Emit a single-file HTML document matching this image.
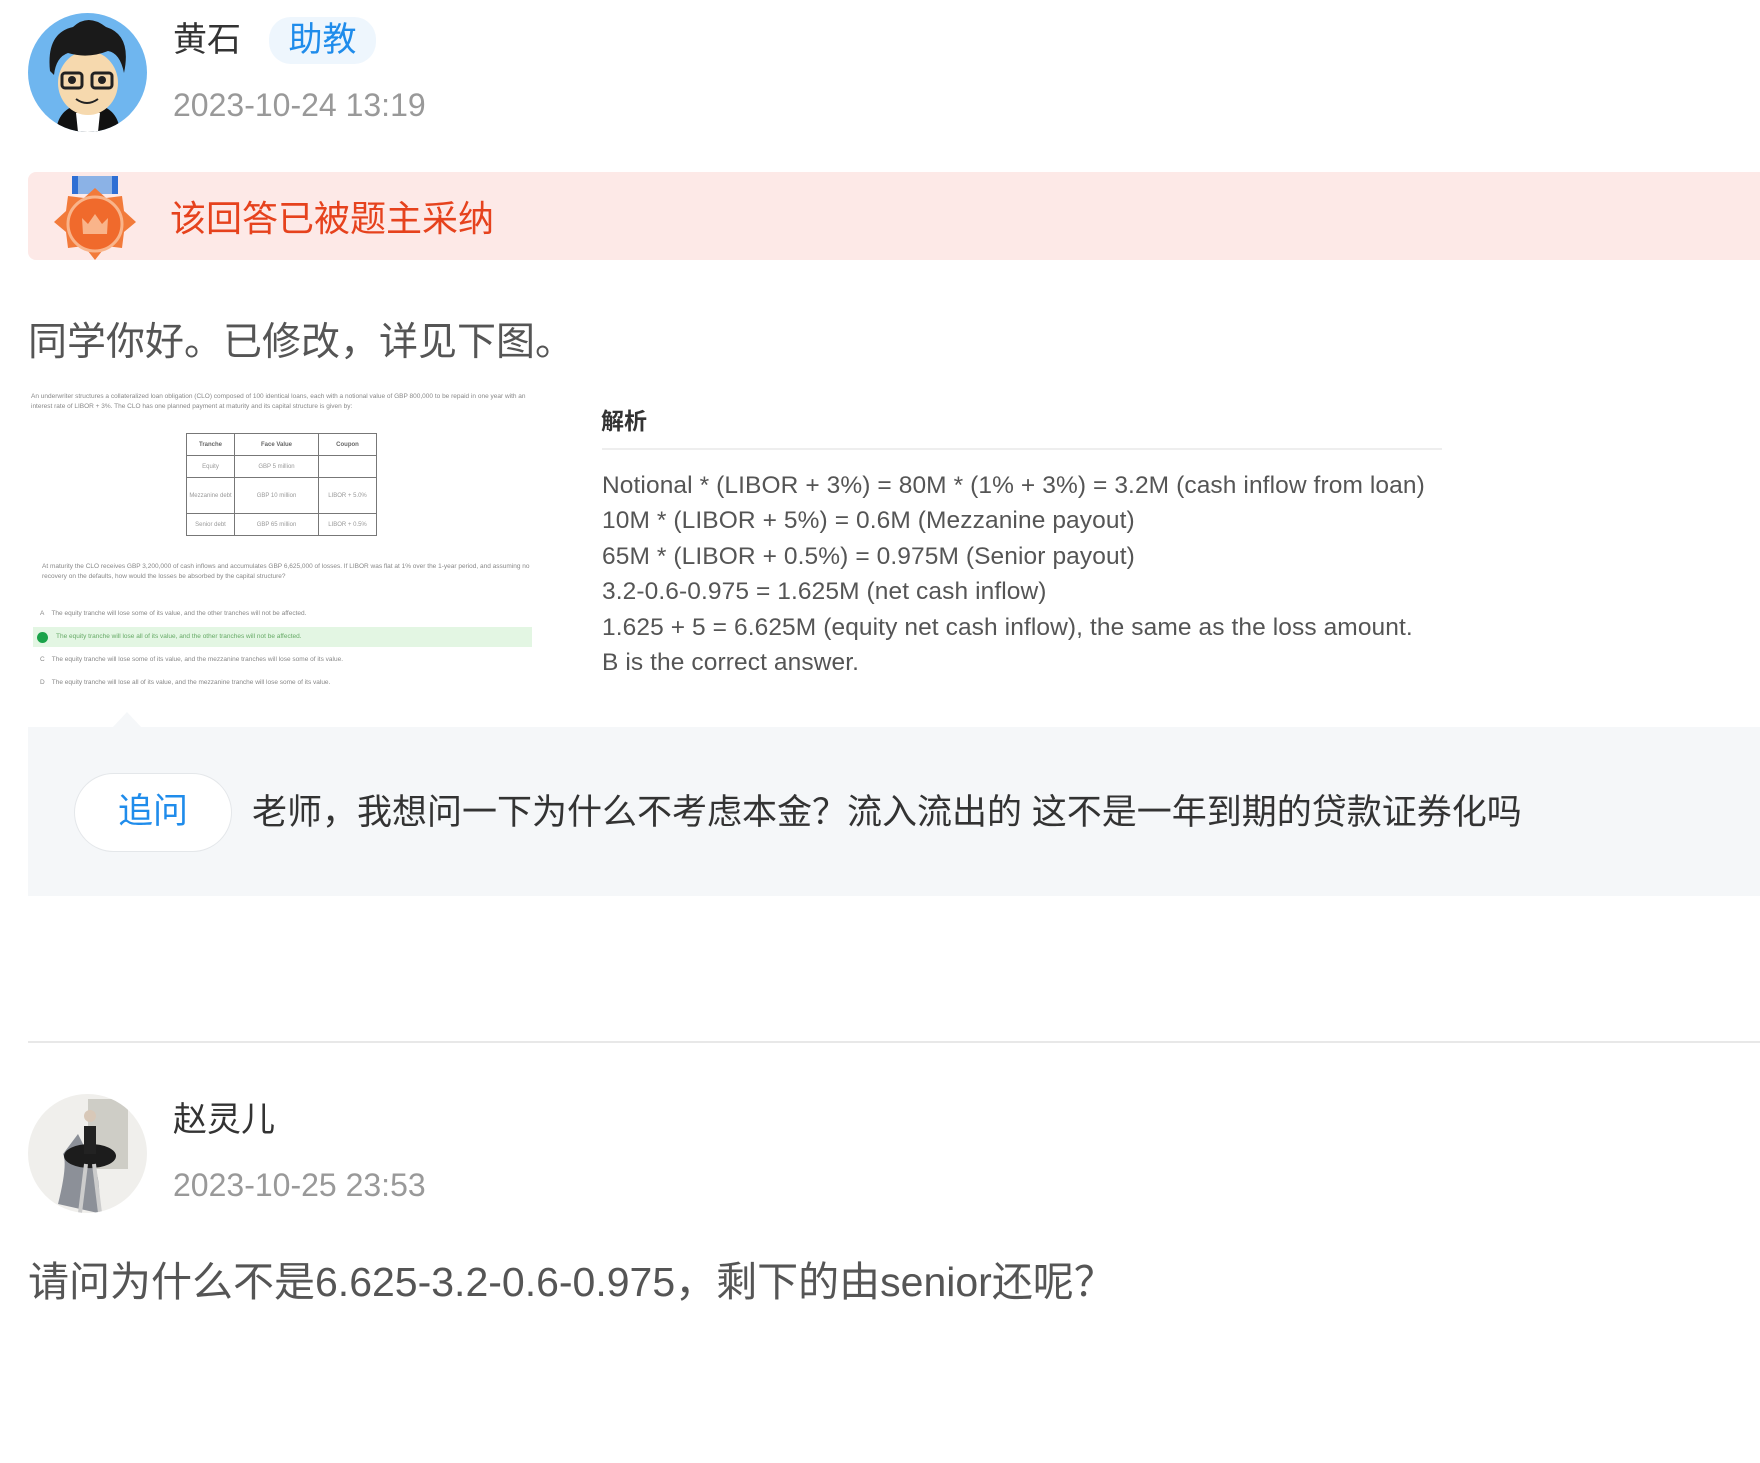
<!DOCTYPE html>
<html><head><meta charset="utf-8"><style>
*{margin:0;padding:0;box-sizing:border-box}
body{width:1760px;height:1463px;background:#fff;position:relative;overflow:hidden;font-family:"Liberation Sans","Noto Sans CJK SC",sans-serif}
.a{position:absolute;white-space:nowrap}
.tiny{font-size:6.5px;color:#888;line-height:10px;white-space:normal}
table{border-collapse:collapse;font-size:6px;color:#999;position:absolute}
td{border:1px solid #777;text-align:center;height:22px}
</style></head><body>
<!-- avatar 1 -->
<svg class="a" style="left:28px;top:13px" width="119" height="119" viewBox="0 0 119 119">
<clipPath id="c1"><circle cx="59.5" cy="59.5" r="59.5"/></clipPath>
<g clip-path="url(#c1)">
<rect width="119" height="119" fill="#6fb6ef"/>
<path d="M28 119 Q30 92 60 90 Q90 92 92 119Z" fill="#111"/>
<path d="M48 100 L72 100 L70 119 L50 119Z" fill="#fff"/>
<ellipse cx="60" cy="70" rx="30" ry="32" fill="#f6d9ae"/>
<path d="M22 58 Q18 20 45 14 Q60 0 78 14 Q104 22 96 60 Q92 40 80 38 Q60 46 40 40 Q28 44 26 62Z" fill="#1a1a1a"/>
<rect x="34" y="60" width="20" height="15" rx="3" fill="none" stroke="#222" stroke-width="3"/>
<rect x="64" y="60" width="20" height="15" rx="3" fill="none" stroke="#222" stroke-width="3"/>
<circle cx="44" cy="67" r="4" fill="#222"/><circle cx="74" cy="67" r="4" fill="#222"/>
<path d="M48 86 Q59 94 70 86" fill="none" stroke="#222" stroke-width="2"/>
</g></svg>
<div class="a" style="left:173px;top:18px;font-size:34px;color:#333;line-height:44px">黄石</div>
<div class="a" style="left:269px;top:17px;width:107px;height:47px;border-radius:22px;background:#eef6fd;color:#1f8ceb;font-size:34px;line-height:47px;text-align:center">助教</div>
<div class="a" style="left:173px;top:86px;font-size:32px;color:#999;line-height:38px">2023-10-24 13:19</div>
<!-- banner -->
<div class="a" style="left:28px;top:172px;width:1732px;height:88px;background:#fde9e7;border-radius:8px 0 0 8px"></div>
<svg class="a" style="left:52px;top:174px" width="88" height="90" viewBox="0 0 88 90">
<rect x="20" y="2" width="46" height="18" fill="#8bb2e6"/><rect x="20" y="2" width="6" height="18" fill="#2f6fd4"/><rect x="60" y="2" width="6" height="18" fill="#2f6fd4"/>
<polygon points="43,14 54,24 70,22 72,37 84,48 72,58 70,74 54,72 43,86 32,72 16,74 14,58 2,48 14,37 16,22 32,24" fill="#f27a3a"/>
<circle cx="43" cy="50" r="27" fill="#f06a2c" stroke="#f9b48a" stroke-width="3"/>
<path d="M30 44 L36 50 L43 40 L50 50 L56 44 L55 60 L31 60Z" fill="#f9b48a"/>
</svg>
<div class="a" style="left:170px;top:196px;font-size:36px;color:#e6421d;line-height:46px">该回答已被题主采纳</div>
<div class="a" style="left:28px;top:318px;font-size:39px;color:#555;line-height:50px">同学你好。已修改，详见下图。</div>
<!-- left image -->
<div class="a tiny" style="left:31px;top:392px;width:495px">An underwriter structures a collateralized loan obligation (CLO) composed of 100 identical loans, each with a notional value of GBP 800,000 to be repaid in one year with an interest rate of LIBOR + 3%. The CLO has one planned payment at maturity and its capital structure is given by:</div>
<table style="left:186px;top:433px;width:191px">
<tr><td style="width:48px;font-weight:bold;color:#666">Tranche</td><td style="width:84px;font-weight:bold;color:#666">Face Value</td><td style="font-weight:bold;color:#666">Coupon</td></tr>
<tr><td>Equity</td><td>GBP 5 million</td><td></td></tr>
<tr><td style="height:36px">Mezzanine debt</td><td>GBP 10 million</td><td>LIBOR + 5.0%</td></tr>
<tr><td>Senior debt</td><td>GBP 65 million</td><td>LIBOR + 0.5%</td></tr>
</table>
<div class="a tiny" style="left:42px;top:562px;width:490px">At maturity the CLO receives GBP 3,200,000 of cash inflows and accumulates GBP 6,625,000 of losses. If LIBOR was flat at 1% over the 1-year period, and assuming no recovery on the defaults, how would the losses be absorbed by the capital structure?</div>
<div class="a tiny" style="left:40px;top:609px">A&nbsp;&nbsp;&nbsp; The equity tranche will lose some of its value, and the other tranches will not be affected.</div>
<div class="a" style="left:33px;top:627px;width:499px;height:20px;background:#e3f6e3"></div>
<div class="a" style="left:37px;top:632px;width:11px;height:11px;border-radius:50%;background:#1aa34a"></div>
<div class="a tiny" style="left:56px;top:632px;color:#6a6">The equity tranche will lose all of its value, and the other tranches will not be affected.</div>
<div class="a tiny" style="left:40px;top:655px">C&nbsp;&nbsp;&nbsp; The equity tranche will lose some of its value, and the mezzanine tranches will lose some of its value.</div>
<div class="a tiny" style="left:40px;top:678px">D&nbsp;&nbsp;&nbsp; The equity tranche will lose all of its value, and the mezzanine tranche will lose some of its value.</div>
<!-- right image -->
<div class="a" style="left:601px;top:406px;font-size:23px;font-weight:bold;color:#333;line-height:30px">解析</div>
<div class="a" style="left:602px;top:448px;width:840px;height:2px;background:#eee"></div>
<div class="a" style="left:602px;top:468px;font-size:24.5px;color:#555;line-height:35.4px;letter-spacing:0.1px">Notional * (LIBOR + 3%) = 80M * (1% + 3%) = 3.2M (cash inflow from loan)<br>10M * (LIBOR + 5%) = 0.6M (Mezzanine payout)<br>65M * (LIBOR + 0.5%) = 0.975M (Senior payout)<br>3.2-0.6-0.975 = 1.625M (net cash inflow)<br>1.625 + 5 = 6.625M (equity net cash inflow), the same as the loss amount.<br>B is the correct answer.</div>
<!-- follow-up box -->
<div class="a" style="left:112px;top:712px;width:0;height:0;border-left:15px solid transparent;border-right:15px solid transparent;border-bottom:16px solid #f5f7f9"></div>
<div class="a" style="left:28px;top:727px;width:1732px;height:169px;background:#f5f7f9"></div>
<div class="a" style="left:74px;top:773px;width:158px;height:79px;border-radius:40px;background:#fff;border:1.5px solid #e4e7ea;color:#1f8ceb;font-size:35px;line-height:76px;text-align:center">追问</div>
<div class="a" style="left:252px;top:792px;font-size:35px;color:#333;line-height:42px">老师，我想问一下为什么不考虑本金？流入流出的 这不是一年到期的贷款证券化吗</div>
<div class="a" style="left:28px;top:1041px;width:1732px;height:2px;background:#e8e8e8"></div>
<!-- avatar 2 -->
<svg class="a" style="left:28px;top:1094px" width="119" height="119" viewBox="0 0 119 119">
<clipPath id="c2"><circle cx="59.5" cy="59.5" r="59.5"/></clipPath>
<g clip-path="url(#c2)">
<rect width="119" height="119" fill="#f0efec"/>
<rect x="60" y="5" width="40" height="70" fill="#b8b6ad" opacity=".6"/>
<path d="M30 110 Q40 70 35 60 L50 40 L60 60 Q75 80 70 119Z" fill="#4a5060" opacity=".6"/>
<ellipse cx="62" cy="62" rx="26" ry="12" fill="#1c1c1c"/>
<rect x="56" y="32" width="12" height="28" fill="#222"/>
<circle cx="62" cy="22" r="6" fill="#d8c8b8"/>
<path d="M58 70 L52 119 M66 70 L72 119" stroke="#ccc" stroke-width="4"/>
</g></svg>
<div class="a" style="left:173px;top:1098px;font-size:34px;color:#333;line-height:44px">赵灵儿</div>
<div class="a" style="left:173px;top:1166px;font-size:32px;color:#999;line-height:38px">2023-10-25 23:53</div>
<div class="a" style="left:28px;top:1257px;font-size:41px;color:#555;line-height:50px">请问为什么不是6.625-3.2-0.6-0.975，剩下的由senior还呢？</div>
</body></html>
